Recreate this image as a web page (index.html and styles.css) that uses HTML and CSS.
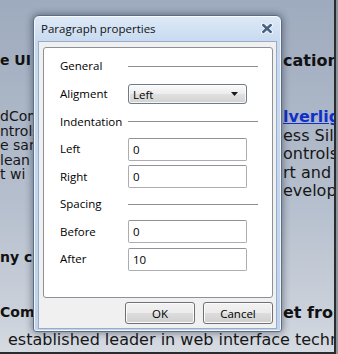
FILE: index.html
```html
<!DOCTYPE html>
<html>
<head>
<meta charset="utf-8">
<link rel="stylesheet" href="styles.css">
</head>
<body>
<div class="screen">
  <div class="page">
    <div class="upper">
      <div class="col-left">
        <div class="h l-head1">e UI</div>
        <div class="l-para">
          <div>dCom</div>
          <div>ntrols</div>
          <div>e sam</div>
          <div>lean</div>
          <div>t wi</div>
        </div>
        <div class="h l-head2">ny cl</div>
        <div class="h l-head3">Com</div>
      </div>
      <div class="col-gap"></div>
      <div class="col-right">
        <div class="h r-head1">cation</div>
        <div class="r-para">
          <div><a class="link" href="#">lverlight</a></div>
          <div>ess Silverlight</div>
          <div>ontrols</div>
          <div>rt and</div>
          <div>evelopment</div>
        </div>
        <div class="h r-head2">et from</div>
      </div>
    </div>
    <div class="bottom">established leader in web interface technology</div>
  </div>

  <div class="dialog">
    <div class="titlebar">
      <span class="title">Paragraph properties</span>
      <svg class="close" width="12" height="11" viewBox="0 0 12 11">
        <path d="M2.2 2 L9.8 9 M9.8 2 L2.2 9" stroke="#f4f8fc" stroke-width="4.4" stroke-linecap="round" fill="none"/>
        <path d="M2.2 2 L9.8 9 M9.8 2 L2.2 9" stroke="#4a6282" stroke-width="2.4" stroke-linecap="round" fill="none"/>
      </svg>
    </div>
    <div class="client">
      <div class="panel">
        <div class="form">
          <div class="lbl">General</div><div class="rule"></div>
          <div class="lbl">Aligment</div>
          <div class="select"><span>Left</span>
            <svg class="arrow" width="7" height="4" viewBox="0 0 7 4"><path d="M0 0 H7 L3.5 4 Z" fill="#1a1a1a"/></svg>
          </div>
          <div class="lbl">Indentation</div><div class="rule"></div>
          <div class="lbl">Left</div><div class="input">0</div>
          <div class="lbl">Right</div><div class="input">0</div>
          <div class="lbl">Spacing</div><div class="rule"></div>
          <div class="lbl">Before</div><div class="input">0</div>
          <div class="lbl">After</div><div class="input">10</div>
        </div>
      </div>
      <div class="buttons">
        <button class="btn">OK</button>
        <button class="btn">Cancel</button>
      </div>
    </div>
  </div>
</div>
</body>
</html>
```

FILE: styles.css
```css
body {
  margin: 0;
}

.screen {
  position: relative;
  width: 338px;
  height: 354px;
  background: #8d949e;
  overflow: hidden;
}

.page {
  width: 334px;
  height: 352px;
  border-right: 2px solid #2a2c30;
  border-bottom: 2px solid #2a2c30;
  background: linear-gradient(#9eabbe, #b7c0ce 60%, #cdd3dc 92%, #d6dbe2);
  font-family: "DejaVu Sans", Verdana, sans-serif;
  color: #161616;
  display: flex;
  flex-direction: column;
}

.upper {
  height: 331px;
  display: flex;
}

.col-left {
  width: 33px;
  overflow: hidden;
  white-space: nowrap;
  font-size: 14px;
  line-height: 14.5px;
}

.col-gap {
  width: 250px;
}

.col-right {
  width: 51px;
  overflow: hidden;
  white-space: nowrap;
  font-size: 16px;
  line-height: 18.5px;
}

.h {
  font-weight: bold;
  line-height: 18px;
  color: #111;
}

.col-left .h {
  font-size: 14px;
}

.col-right .h {
  font-size: 16px;
}

.l-head1 { margin-top: 51px; }
.l-para { margin-top: 40px; }
.l-head2 { margin-top: 66px; }
.l-head3 { margin-top: 37px; }

.r-head1 { margin-top: 52px; }
.r-para { margin-top: 38px; }
.r-head2 { margin-top: 103px; }

.link {
  color: #1030c8;
  font-weight: bold;
  text-decoration: underline;
}

.bottom {
  padding-left: 8px;
  font-size: 16px;
  line-height: 18px;
  white-space: nowrap;
  overflow: hidden;
}

/* dialog */
.dialog {
  position: absolute;
  left: 33px;
  top: 15px;
  width: 249px;
  box-sizing: border-box;
  border: 1px solid #5e6d80;
  border-radius: 6px 6px 3px 3px;
  background: linear-gradient(#dde9f7, #c8daf0 26px, #bfd3ec);
  box-shadow: 0 0 7px 1px rgba(20, 30, 50, 0.45), inset 0 0 0 1px rgba(255, 255, 255, 0.75);
  padding: 0 4px 2px;
  font-family: "Open Sans", "Segoe UI", sans-serif;
  font-size: 11.5px;
  color: #000;
}

.titlebar {
  height: 25px;
  display: flex;
  align-items: center;
  justify-content: space-between;
  padding-left: 3px;
  padding-right: 4px;
}

.title {
  color: #111;
}

.close {
  display: block;
}

.client {
  border: 1px solid #98acc8;
  background: #f0f0f0;
  padding: 5px 3px 4px 4px;
}

.panel {
  height: 251px;
  box-sizing: border-box;
  border: 1px solid #8a9199;
  border-radius: 3px;
  background: #fff;
  padding: 4px 0 0 16px;
}

.form {
  display: grid;
  grid-template-columns: 68px 130px;
  grid-template-rows: 28px 28px 27px 28px 27px 28px 27px 28px;
  align-items: center;
}

.lbl {
  line-height: 16px;
}

.rule {
  height: 0;
  border-top: 1px solid #8e8e8e;
}

.select {
  width: 119px;
  height: 20px;
  box-sizing: border-box;
  border: 1px solid #6d7a89;
  border-radius: 3px;
  background: linear-gradient(#fbfbfb, #ececec 50%, #e0e0e0 51%, #d2d2d2);
  box-shadow: inset 0 0 0 1px rgba(255, 255, 255, 0.8);
  display: flex;
  align-items: center;
  justify-content: space-between;
  padding: 0 8px 0 4px;
}

.arrow {
  display: block;
}

.input {
  width: 119px;
  height: 23px;
  box-sizing: border-box;
  border: 1px solid #abadb3;
  border-top-color: #8f9297;
  border-radius: 2px;
  background: #fff;
  padding-left: 4px;
  display: flex;
  align-items: center;
}

.buttons {
  display: flex;
  justify-content: flex-end;
  gap: 8px;
  margin-top: 4px;
}

.btn {
  width: 70px;
  height: 22px;
  border: 1px solid #707070;
  border-radius: 3px;
  background: linear-gradient(#f2f2f2, #ebebeb 50%, #dddddd 50%, #cfcfcf);
  box-shadow: inset 0 0 0 1px #fcfcfc;
  font: inherit;
  color: #000;
  padding: 0;
}
```
